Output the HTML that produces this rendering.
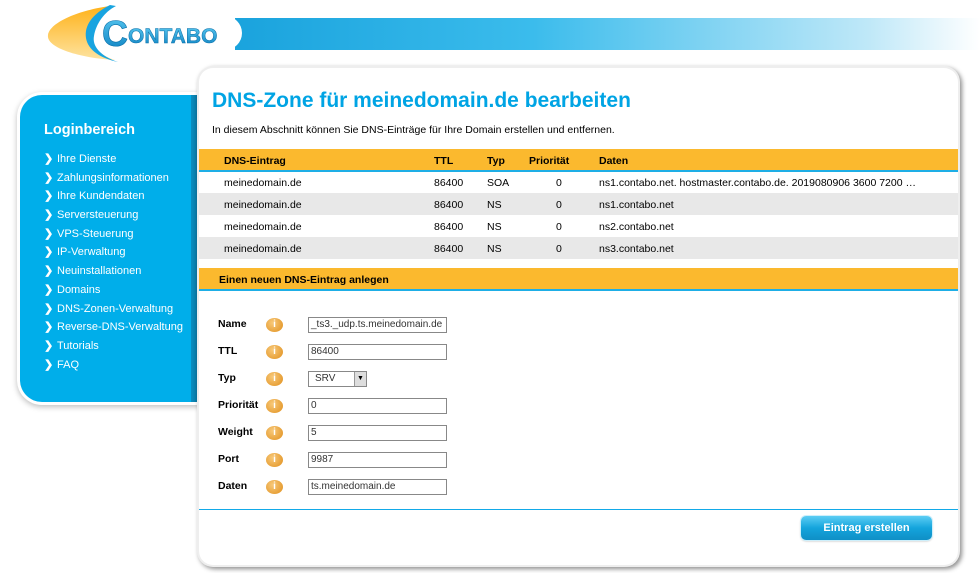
<!DOCTYPE html>
<html><head><meta charset="utf-8"><style>
*{margin:0;padding:0;box-sizing:border-box}
body{width:980px;height:573px;background:#fff;font-family:"Liberation Sans",sans-serif;position:relative;overflow:hidden;font-size:11px;color:#000}
.abs{position:absolute}
.bar{left:235px;top:18px;width:745px;height:32px;background:linear-gradient(90deg,#1aa3dd 0%,#3bbcec 40%,#bfe8f8 85%,#fff 100%)}
.side{left:20px;top:95px;width:180px;height:307px;background:#00aeea;border-radius:22px 0 0 22px;box-shadow:0 0 0 3px #fff,0 2px 6px 3px rgba(0,0,0,.25)}
.side .dk{position:absolute;right:0;top:0;width:9px;height:100%;background:linear-gradient(90deg,#0a8ec0,#0a6f99)}
.side h2{position:absolute;left:24px;top:27px;color:#fff;font-size:14.5px;font-weight:bold}
.side ul{position:absolute;left:24px;top:57px;list-style:none}
.side li{color:#fff;font-size:11px;height:18.7px;line-height:14px}
.side li b{display:inline-block;width:13px;font-size:11px;font-weight:900}
.main{left:199px;top:68px;width:759px;height:497px;background:#fff;border-radius:14px;box-shadow:0 0 0 2px #eee,2px 2px 5px 2px rgba(0,0,0,.45)}
h1{position:absolute;left:13px;top:21px;color:#00a4e4;font-size:21px;font-weight:bold}
.intro{position:absolute;left:13px;top:56px;font-size:10.5px}
.th{position:absolute;left:0;width:759px;height:23px;background:#fbb92e;border-bottom:2px solid #1eaee6;font-weight:bold;font-size:10.5px}
.row{position:absolute;left:0;width:759px;height:22px;font-size:10.5px}
.c{position:absolute;top:6px;white-space:nowrap}
.g{background:#e8e8e8}
.lbl{position:absolute;left:19px;font-weight:bold;font-size:10.5px}
.ic{position:absolute;left:67px;width:17px;height:14px;border-radius:50%;background:radial-gradient(circle at 40% 35%,#f8c97a,#e08f1c);color:#fff;font-size:10px;font-weight:bold;text-align:center;line-height:14px}
.in{position:absolute;left:109px;width:139px;height:16px;border:1px solid #888;font-size:10px;padding-left:2px;line-height:14px;color:#333;background:#fff}
.btn{left:602px;top:448px;width:131px;height:24px;border-radius:5px;background:linear-gradient(#5ccdf4,#14a4dc 50%,#0f8fc6);box-shadow:0 0 0 1px #cdeffb,0 1px 2px rgba(0,0,0,.3);color:#fff;font-weight:bold;font-size:11px;text-align:center;line-height:24px}
.ln{position:absolute;left:0;top:441px;width:759px;height:0;border-top:1px solid #12a9e8}
</style></head><body>
<div class="abs bar"></div>
<svg class="abs" style="left:40px;top:0" width="210" height="66" viewBox="0 0 210 66">
<defs><linearGradient id="o" x1="0" y1="0" x2="0" y2="1"><stop offset="0" stop-color="#ffb21a"/><stop offset="1" stop-color="#fde3a0"/></linearGradient>
<linearGradient id="b" x1="0" y1="0" x2="0" y2="1"><stop offset="0" stop-color="#5bcaf2"/><stop offset="1" stop-color="#0a7fc0"/></linearGradient></defs>
<path d="M8 35 C10 22 40 10 70 6 C55 14 48 26 50 36 C52 48 62 56 75 60 C40 58 6 48 8 35Z" fill="url(#o)"/>
<path d="M70 5 C52 14 44 26 46 38 C48 50 60 58 78 62 C60 56 52 46 54 36 C56 24 64 12 76 6Z" fill="#18a4e0"/>
<rect x="60" y="16" width="142" height="34" rx="17" fill="#fff"/>
<text x="62" y="46" font-family="Liberation Sans" font-weight="bold" font-size="36" fill="url(#b)" stroke="#0a6fa8" stroke-width=".6">C</text>
<text x="88" y="43" font-family="Liberation Sans" font-weight="bold" font-size="21" fill="url(#b)" stroke="#0a6fa8" stroke-width=".5">ONTABO</text>
</svg>
<div class="abs side"><div class="dk"></div><h2>Loginbereich</h2><ul>
<li><b>❯</b>Ihre Dienste</li><li><b>❯</b>Zahlungsinformationen</li><li><b>❯</b>Ihre Kundendaten</li><li><b>❯</b>Serversteuerung</li><li><b>❯</b>VPS-Steuerung</li><li><b>❯</b>IP-Verwaltung</li><li><b>❯</b>Neuinstallationen</li><li><b>❯</b>Domains</li><li><b>❯</b>DNS-Zonen-Verwaltung</li><li><b>❯</b>Reverse-DNS-Verwaltung</li><li><b>❯</b>Tutorials</li><li><b>❯</b>FAQ</li></ul></div>
<div class="abs main">
<h1>DNS-Zone für meinedomain.de bearbeiten</h1>
<div class="intro">In diesem Abschnitt können Sie DNS-Einträge für Ihre Domain erstellen und entfernen.</div>
<div class="th" style="top:81px"><span class="c" style="left:25px">DNS-Eintrag</span><span class="c" style="left:235px">TTL</span><span class="c" style="left:288px">Typ</span><span class="c" style="left:330px">Priorität</span><span class="c" style="left:400px">Daten</span></div>
<div class="row" style="top:103px"><span class="c" style="left:25px">meinedomain.de</span><span class="c" style="left:235px">86400</span><span class="c" style="left:288px">SOA</span><span class="c" style="left:357px">0</span><span class="c" style="left:400px">ns1.contabo.net. hostmaster.contabo.de. 2019080906 3600 7200 …</span></div>
<div class="row g" style="top:125px"><span class="c" style="left:25px">meinedomain.de</span><span class="c" style="left:235px">86400</span><span class="c" style="left:288px">NS</span><span class="c" style="left:357px">0</span><span class="c" style="left:400px">ns1.contabo.net</span></div>
<div class="row" style="top:147px"><span class="c" style="left:25px">meinedomain.de</span><span class="c" style="left:235px">86400</span><span class="c" style="left:288px">NS</span><span class="c" style="left:357px">0</span><span class="c" style="left:400px">ns2.contabo.net</span></div>
<div class="row g" style="top:169px"><span class="c" style="left:25px">meinedomain.de</span><span class="c" style="left:235px">86400</span><span class="c" style="left:288px">NS</span><span class="c" style="left:357px">0</span><span class="c" style="left:400px">ns3.contabo.net</span></div>
<div class="th" style="top:200px"><span class="c" style="left:20px">Einen neuen DNS-Eintrag anlegen</span></div>
<div class="lbl" style="top:250px">Name</div><div class="ic" style="top:250px">i</div><div class="in" style="top:249px">_ts3._udp.ts.meinedomain.de</div>
<div class="lbl" style="top:277px">TTL</div><div class="ic" style="top:277px">i</div><div class="in" style="top:276px">86400</div>
<div class="lbl" style="top:304px">Typ</div><div class="ic" style="top:304px">i</div><div class="in" style="top:303px;width:59px;padding-left:6px">SRV<span style="position:absolute;right:0;top:0;width:12px;height:14px;background:#ddd;border-left:1px solid #999;font-size:7px;text-align:center;color:#000">▼</span></div>
<div class="lbl" style="top:331px">Priorität</div><div class="ic" style="top:331px">i</div><div class="in" style="top:330px">0</div>
<div class="lbl" style="top:358px">Weight</div><div class="ic" style="top:358px">i</div><div class="in" style="top:357px">5</div>
<div class="lbl" style="top:385px">Port</div><div class="ic" style="top:385px">i</div><div class="in" style="top:384px">9987</div>
<div class="lbl" style="top:412px">Daten</div><div class="ic" style="top:412px">i</div><div class="in" style="top:411px">ts.meinedomain.de</div>
<div class="ln"></div>
<div class="abs btn">Eintrag erstellen</div>
</div>
</body></html>
